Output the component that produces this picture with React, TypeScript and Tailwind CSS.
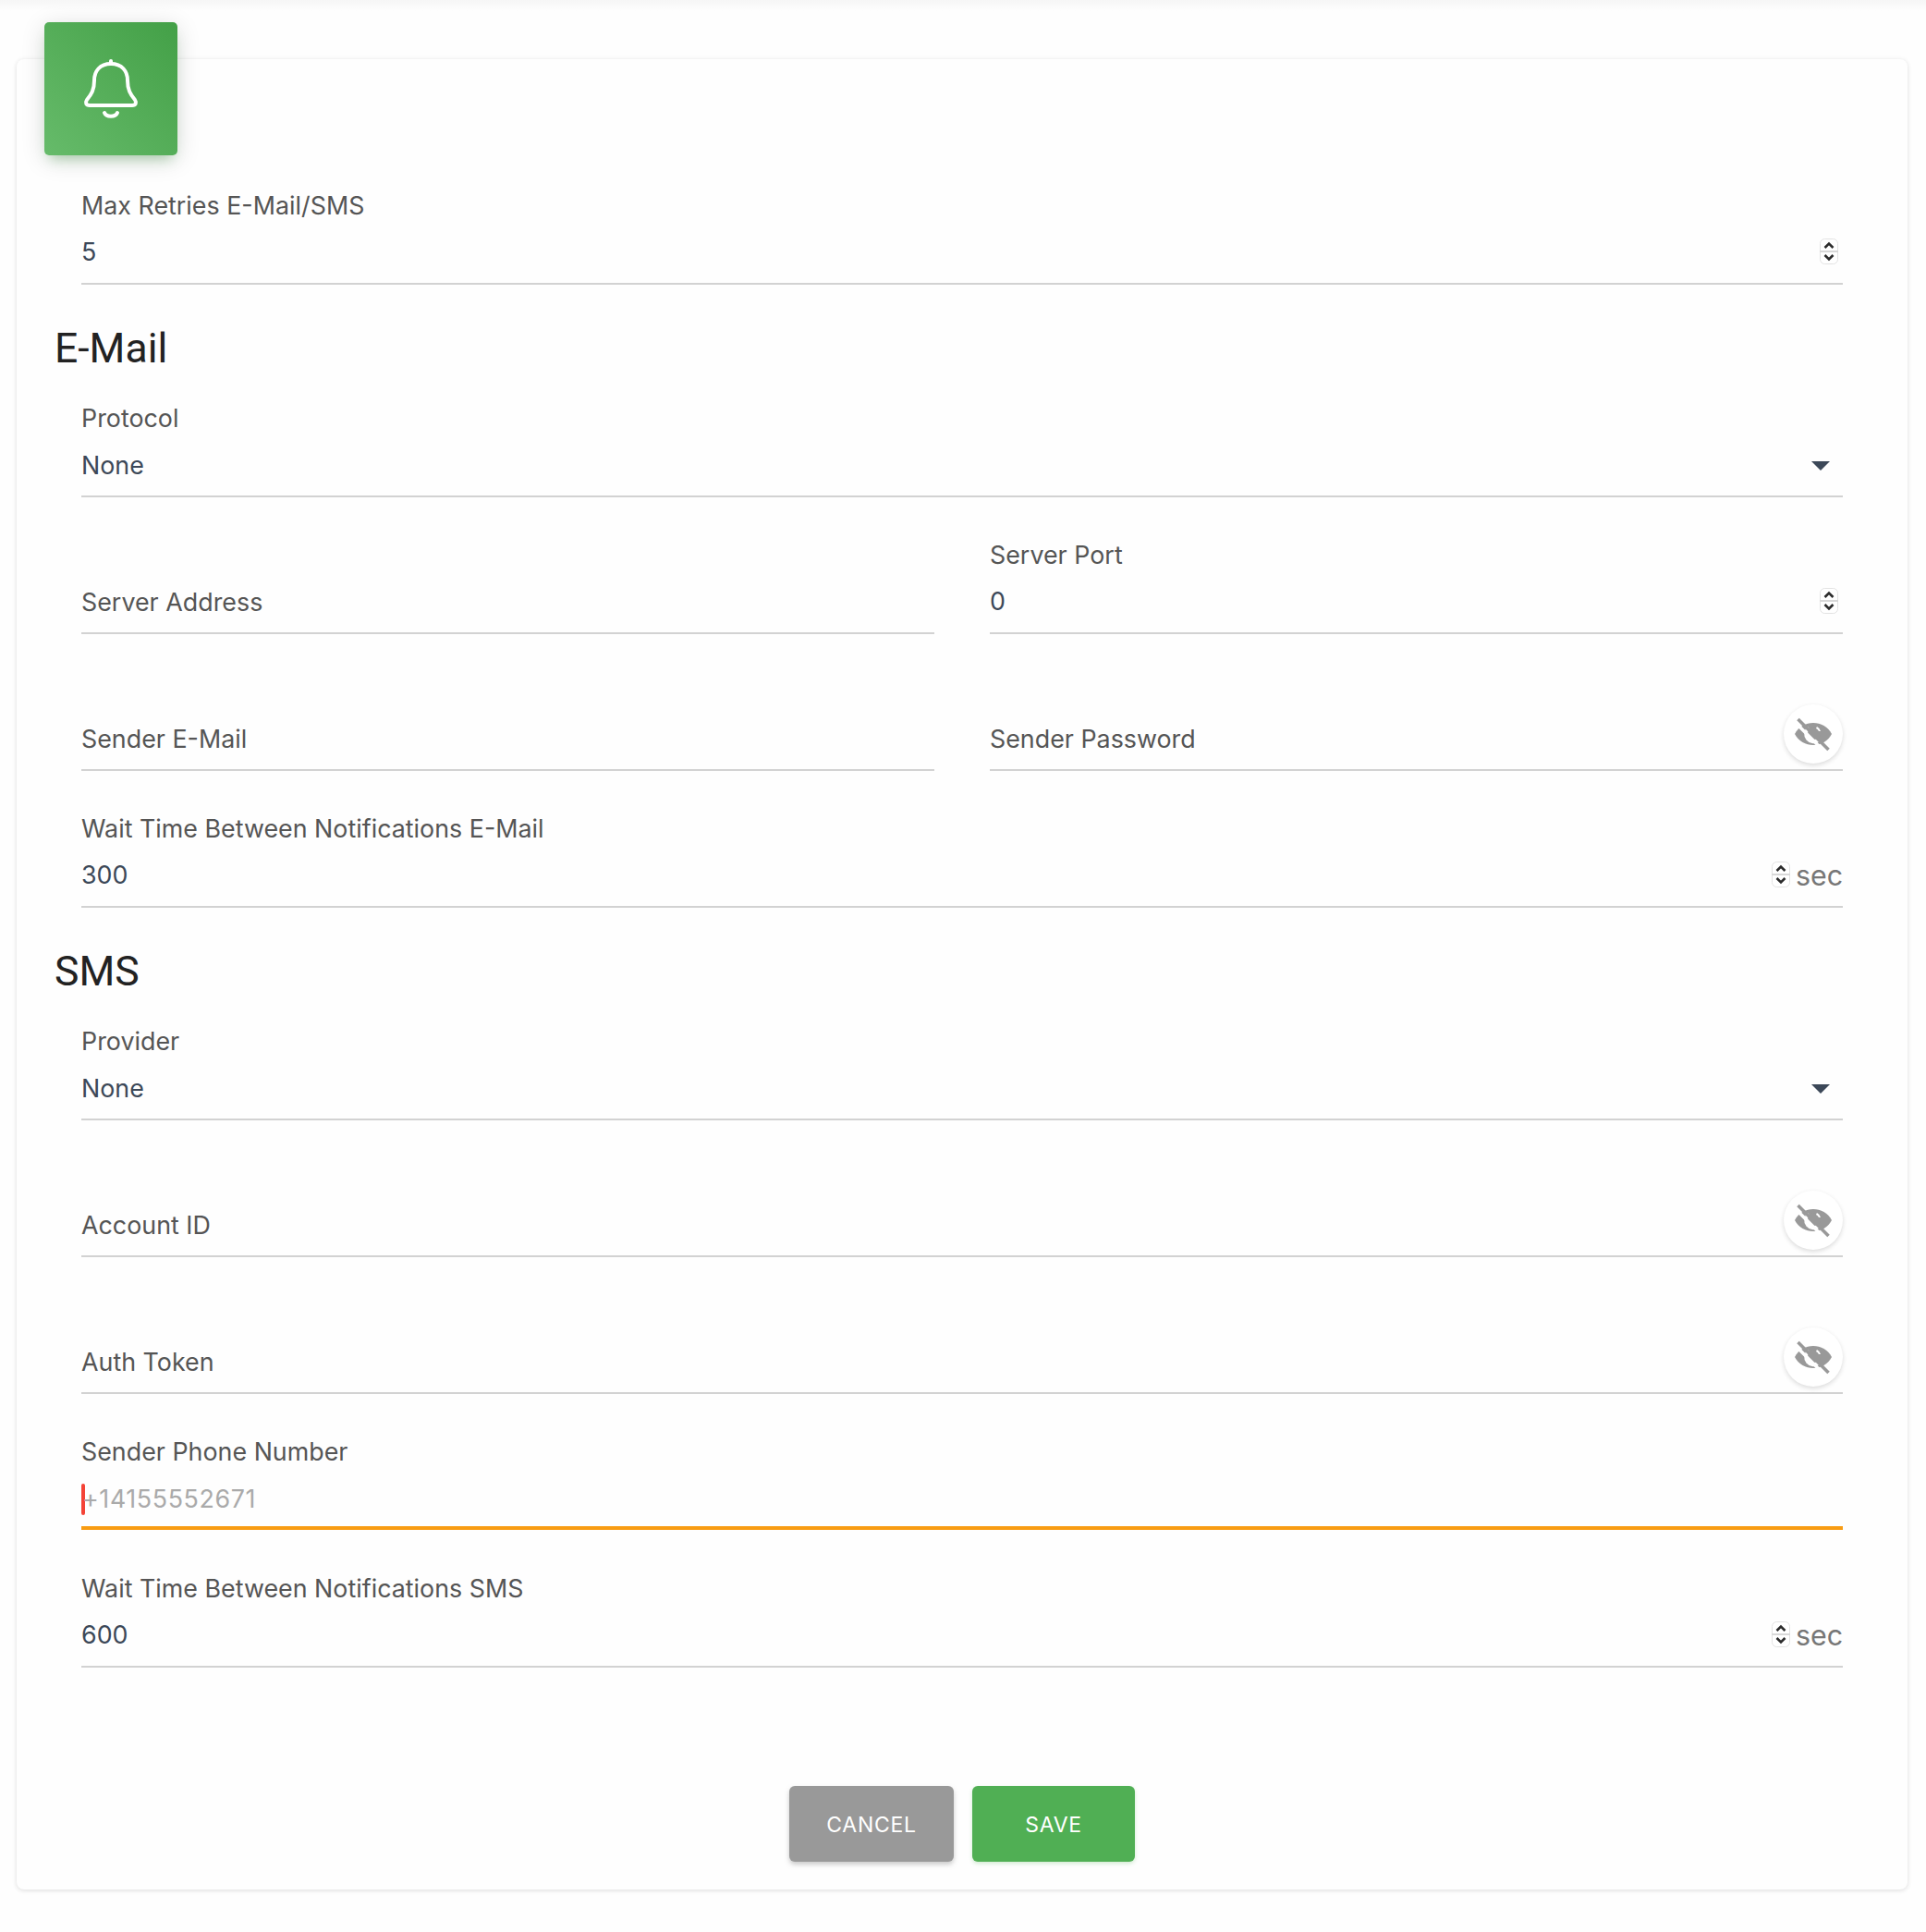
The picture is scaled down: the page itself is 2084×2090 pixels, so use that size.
function Spinner() {
  return (
    <svg width="20" height="28" viewBox="0 0 20 28" className="shrink-0">
      <rect x="0.5" y="0.5" width="19" height="27" rx="5" fill="#fff" stroke="#e2e2e2" />
      <rect x="0" y="13" width="20" height="2" fill="#d8d8d8" />
      <path d="M5.5 10 L10 5.5 L14.5 10" fill="none" stroke="#2b2b2b" strokeWidth="2.6" />
      <path d="M5.5 18 L10 22.5 L14.5 18" fill="none" stroke="#2b2b2b" strokeWidth="2.6" />
    </svg>
  );
}

function Bell() {
  return (
    <svg width="60" height="68" viewBox="0 0 60 68" fill="none" stroke="#fff" strokeWidth="4" strokeLinejoin="round" strokeLinecap="round">
      <path d="M30 4 V7" />
      <path d="M30 7 C18 7 12 15 12 25 C12 35 9 40 4 46 C2 49 3 52 7 52 H53 C57 52 58 49 56 46 C51 40 48 35 48 25 C48 15 42 7 30 7 Z" />
      <path d="M23 60 C25 65 35 65 37 60" />
    </svg>
  );
}

function EyeOff() {
  return (
    <svg width="40" height="40" viewBox="0 0 40 40" className="-mt-[2px]">
      <path d="M0 21 C8 5 32 5 40 21 C32 37 8 37 0 21 Z" fill="#999" />
      <path d="M14 13 A10 10 0 0 0 27 29 Z" fill="#fff" />
      <circle cx="21" cy="20" r="7" fill="#999" />
      <path d="M24 13 A8 8 0 0 1 28 18 L26 18 A6 6 0 0 0 23 15 Z" fill="#fff" />
      <path d="M2 6 L36 40" stroke="#fff" strokeWidth="3.5" transform="translate(-2 2)" />
      <path d="M3.5 5 L36.5 38" stroke="#999" strokeWidth="3.6" />
    </svg>
  );
}

function Label({ children }: { children: string }) {
  return <div className="h-[40px] mb-[4px] text-[26.85px] leading-[40px] text-[#555]">{children}</div>;
}

function NumberField({ label, value, unit }: { label: string; value: string; unit?: boolean }) {
  return (
    <div className="h-[106px] flex flex-col justify-end">
      <Label>{label}</Label>
      <div className="h-[62px] border-b-2 border-[#d2d2d2] pb-[7px] flex items-center text-[26.85px] text-[#3c4858]">
        <span className="flex-1">{value}</span>
        {unit ? (
          <span className="flex items-center -mt-[1px]">
            <Spinner />
            <span className="ml-[6px] mt-[2px] text-[30.4px] leading-[40px] text-[#777]">sec</span>
          </span>
        ) : (
          <span className="mr-[5px] -mt-[1px] flex"><Spinner /></span>
        )}
      </div>
    </div>
  );
}

function SelectField({ label }: { label: string }) {
  return (
    <div className="h-[106px] flex flex-col justify-end">
      <Label>{label}</Label>
      <div className="h-[62px] border-b-2 border-[#d2d2d2] pb-[5px] flex items-center text-[26.85px] text-[#3c4858]">
        <span className="flex-1">None</span>
        <span className="mr-[14px] w-0 h-0 border-x-[10px] border-x-transparent border-t-[10px] border-t-[#3c4858]" />
      </div>
    </div>
  );
}

function EmptyField({ label, eye }: { label: string; eye?: boolean }) {
  return (
    <div className="h-[106px] flex flex-col justify-end">
      <div className="relative h-[62px] border-b-2 border-[#d2d2d2] pb-[5px] flex items-center text-[26.85px] text-[#555]">
        <span className="flex-1">{label}</span>
        {eye ? (
          <span className="absolute right-0 bottom-[6px] w-[64px] h-[64px] rounded-full bg-white shadow-[0_2px_5px_rgba(0,0,0,0.14)] flex items-center justify-center">
            <EyeOff />
          </span>
        ) : null}
      </div>
    </div>
  );
}

function Heading({ children }: { children: string }) {
  return (
    <h3 className="-mx-[29px] mt-[42px] mb-[28px] h-[54px] text-[44.5px] leading-[54px] text-[#222] font-['Roboto',sans-serif] font-normal">
      {children}
    </h3>
  );
}

export default function App() {
  return (
    <div className="min-h-[2090px] bg-[#fefefe] font-['Inter','Noto_Sans',sans-serif]">
      <div className="h-[12px] bg-gradient-to-b from-[#f6f6f6] to-[#fefefe]" />
      <div className="relative mt-[52px] ml-[18px] mr-[20px] rounded-[8px] bg-[#fefefe] shadow-[0_1px_5px_rgba(0,0,0,0.14)] pt-[96px] pb-[30px] px-[70px]">
        <div className="absolute left-[30px] -top-[40px] w-[144px] h-[144px] rounded-[5px] bg-gradient-to-tr from-[#66bb6a] to-[#43a047] shadow-[0_5px_27px_rgba(0,0,0,0.14),0_9px_13px_-6px_rgba(76,175,80,0.4)] flex items-center justify-center">
          <Bell />
        </div>

        <div className="pt-[42px]">
          <NumberField label="Max Retries E-Mail/SMS" value="5" />
        </div>

        <Heading>E-Mail</Heading>
        <div className="flex flex-col gap-[42px]">
          <SelectField label="Protocol" />
          <div className="grid grid-cols-2 gap-x-[60px]">
            <EmptyField label="Server Address" />
            <NumberField label="Server Port" value="0" />
          </div>
          <div className="grid grid-cols-2 gap-x-[60px]">
            <EmptyField label="Sender E-Mail" />
            <EmptyField label="Sender Password" eye />
          </div>
          <NumberField label="Wait Time Between Notifications E-Mail" value="300" unit />
        </div>

        <Heading>SMS</Heading>
        <div className="flex flex-col gap-[42px]">
          <SelectField label="Provider" />
          <EmptyField label="Account ID" eye />
          <EmptyField label="Auth Token" eye />
          <div className="h-[105px] mb-[1px] flex flex-col justify-end">
            <Label>Sender Phone Number</Label>
            <div className="h-[61px] border-b-4 border-[#f89c12] pb-[2px] flex items-center text-[26.85px] tracking-[0.6px] text-[#aaa]">
              <span className="w-[4px] h-[34px] rounded-[2px] bg-[#f44336] shrink-0" />
              <span className="-ml-[3px]">+14155552671</span>
            </div>
          </div>
          <NumberField label="Wait Time Between Notifications SMS" value="600" unit />
        </div>

        <div className="mt-[128px] flex justify-center gap-[20px]">
          <button className="w-[178px] h-[82px] pt-[2px] rounded-[6px] bg-[#999] text-white text-[23px] tracking-[0.7px] shadow-[0_3px_5px_rgba(153,153,153,0.5)]">
            CANCEL
          </button>
          <button className="w-[176px] h-[82px] pt-[2px] rounded-[6px] bg-[#50af54] text-white text-[23px] tracking-[0.7px] shadow-[0_2px_4px_rgba(76,175,80,0.25)]">
            SAVE
          </button>
        </div>
      </div>
    </div>
  );
}
